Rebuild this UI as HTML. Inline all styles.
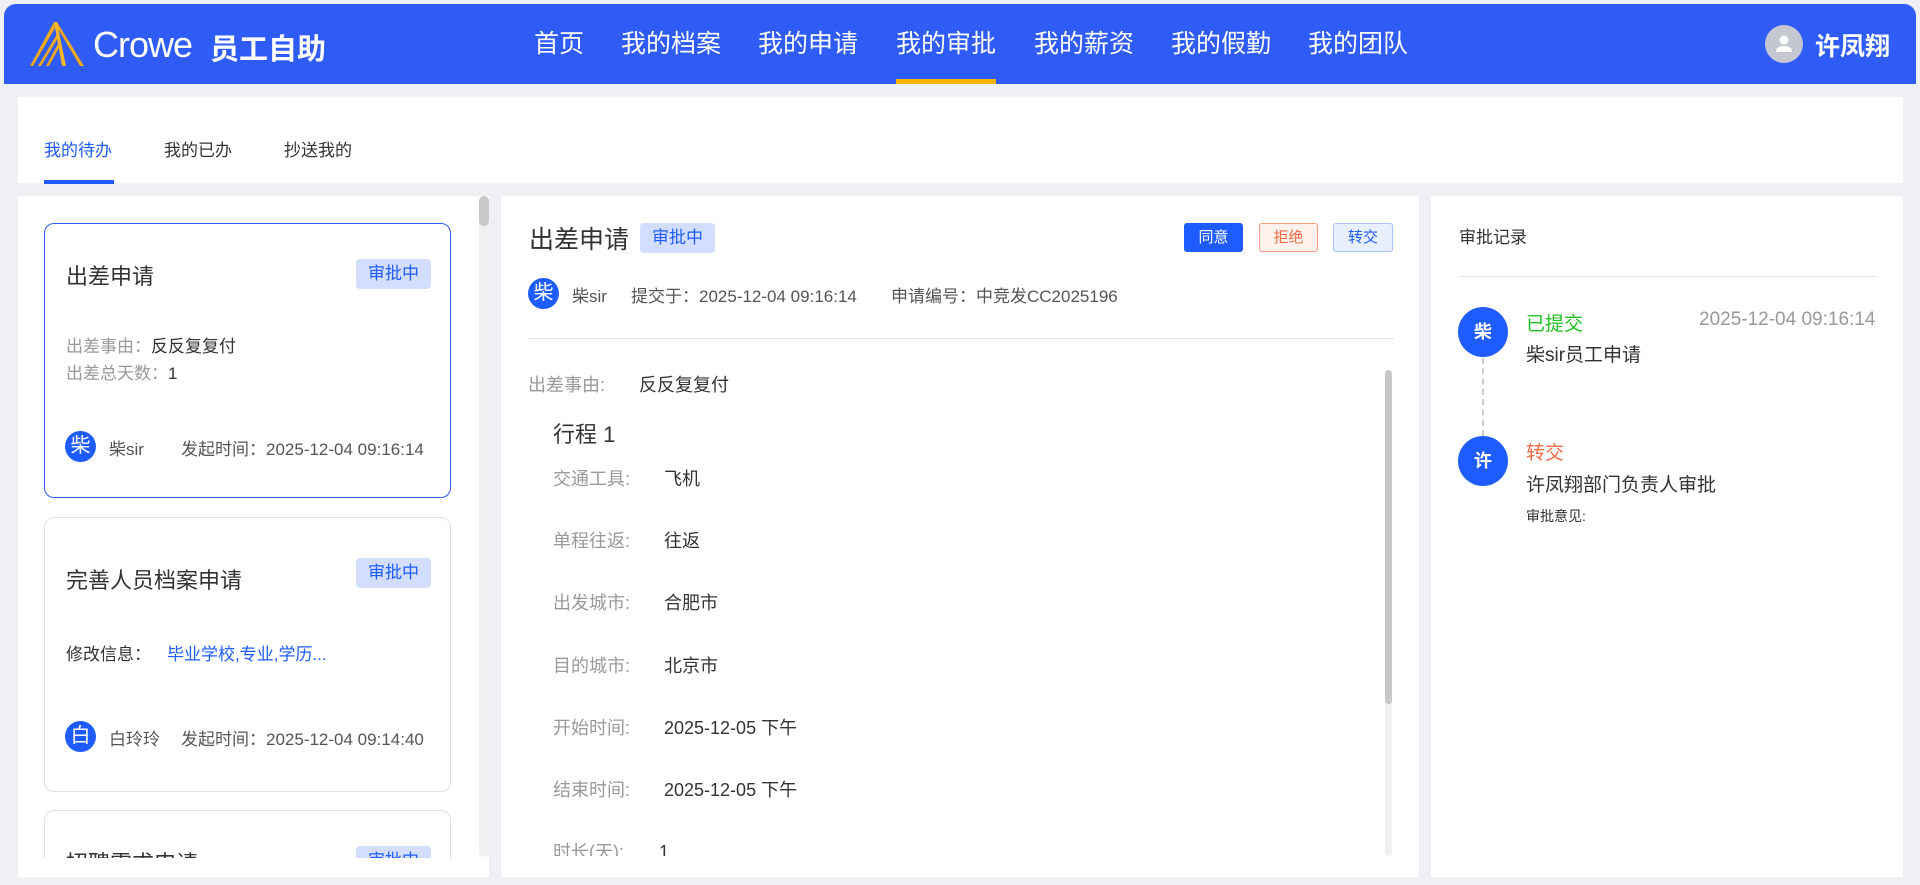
<!DOCTYPE html>
<html><head><meta charset="utf-8"><style>
*{margin:0;padding:0;box-sizing:border-box}
html,body{overflow:hidden}
body{width:1920px;height:885px;background:#eef0f4;font-family:"Liberation Sans","Noto Sans CJK SC",sans-serif;color:#333;position:relative}
.a{position:absolute;white-space:nowrap}
.hdr{left:4px;top:4px;width:1912px;height:80px;background:#2f5cf6;border-radius:12px 12px 0 0}
.nav{top:24px;font-size:25px;color:#fff}
.panel{background:#fff}
.card{position:absolute;left:26px;width:407px;border:1px solid #dcdfe6;border-radius:10px;background:#fff}
.badge{position:absolute;background:#d3deff;color:#1e5cff;font-size:17px;border-radius:4px;text-align:center;line-height:30px;height:30px;width:75px}
.av{position:absolute;width:31px;height:31px;border-radius:50%;background:#1e5cff;color:#fff;font-size:20px;line-height:31px;text-align:center}
.lbl{color:#999}
.row{font-size:18px}
.row .lbl{display:inline-block;width:111px}
</style></head><body>
<div class="a hdr"></div>
<svg class="a" style="left:28px;top:20px" width="56" height="48" viewBox="0 0 56 48"><path d="M26 2 L29 2 L56 46 L52 46 Z" fill="#f2a81d"/><path d="M26 2 L2 46 L5 46 L27 8 Z" fill="#f2a81d"/><path d="M29 14 L10 46 L13 46 L30 18 Z" fill="#f2a81d"/><path d="M32 20 L18 46 L21 46 L33 24 Z" fill="#f2a81d"/><path d="M26 2 L29 2 L38 46 L34 46 Z" fill="#f7b52a"/></svg>
<div class="a" style="left:93px;top:24px;font-size:36px;color:#fff;letter-spacing:-1px">Crowe</div>
<div class="a" style="left:210px;top:26px;font-size:29px;color:#fff;font-weight:bold">员工自助</div>
<div class="a nav" style="left:534px">首页</div>
<div class="a nav" style="left:621px">我的档案</div>
<div class="a nav" style="left:758px">我的申请</div>
<div class="a nav" style="left:896px">我的审批</div>
<div class="a nav" style="left:1034px">我的薪资</div>
<div class="a nav" style="left:1171px">我的假勤</div>
<div class="a nav" style="left:1308px">我的团队</div>
<div class="a" style="left:896px;top:79px;width:100px;height:5px;background:#f5b400"></div>
<div class="a" style="left:1765px;top:25px;width:38px;height:38px;border-radius:50%;background:#c4c7cf"></div>
<svg class="a" style="left:1774px;top:33px" width="20" height="22" viewBox="0 0 20 22"><circle cx="10" cy="7" r="4.5" fill="#fff"/><path d="M2 19 Q2 13 10 13 Q18 13 18 19 Z" fill="#fff"/></svg>
<div class="a" style="left:1815px;top:27px;font-size:25px;color:#fff;font-weight:bold">许凤翔</div>

<div class="a panel" style="left:18px;top:97px;width:1885px;height:86px"></div>
<div class="a" style="left:44px;top:136px;font-size:17px;color:#1e5cff">我的待办</div>
<div class="a" style="left:44px;top:180px;width:70px;height:4px;background:#1e5cff"></div>
<div class="a" style="left:164px;top:136px;font-size:17px;color:#333">我的已办</div>
<div class="a" style="left:284px;top:136px;font-size:17px;color:#333">抄送我的</div>

<div class="a panel" style="left:18px;top:196px;width:471px;height:681px;overflow:hidden">
 <div class="a" style="left:461px;top:0;width:10px;height:661px;background:#f0f0f0;border-radius:5px"></div>
 <div class="a" style="left:461px;top:0;width:10px;height:30px;background:#c8c8c8;border-radius:5px"></div>
 <div class="a" style="left:0;top:0;width:461px;height:662px;overflow:hidden">
  <div class="card" style="top:27px;height:275px;border-color:#2f5cf6">
   <div class="a" style="left:21px;top:35px;font-size:22px">出差申请</div>
   <div class="badge" style="left:311px;top:35px">审批中</div>
   <div class="a" style="left:21px;top:108px;font-size:17px"><span class="lbl">出差事由：</span>反反复复付</div>
   <div class="a" style="left:21px;top:135px;font-size:17px"><span class="lbl">出差总天数：</span>1</div>
   <div class="av" style="left:20px;top:207px">柴</div>
   <div class="a" style="left:64px;top:211px;font-size:17px;color:#555">柴sir</div>
   <div class="a" style="left:136px;top:211px;font-size:17px;color:#555">发起时间：2025-12-04 09:16:14</div>
  </div>
  <div class="card" style="top:321px;height:275px">
   <div class="a" style="left:21px;top:45px;font-size:22px">完善人员档案申请</div>
   <div class="badge" style="left:311px;top:40px">审批中</div>
   <div class="a" style="left:21px;top:122px;font-size:17px">修改信息：</div>
   <div class="a" style="left:122px;top:122px;font-size:17px;color:#1e5cff">毕业学校,专业,学历...</div>
   <div class="av" style="left:20px;top:203px">白</div>
   <div class="a" style="left:64px;top:207px;font-size:17px;color:#555">白玲玲</div>
   <div class="a" style="left:136px;top:207px;font-size:17px;color:#555">发起时间：2025-12-04 09:14:40</div>
  </div>
  <div class="card" style="top:614px;height:275px">
   <div class="a" style="left:21px;top:35px;font-size:22px">招聘需求申请</div>
   <div class="badge" style="left:311px;top:35px">审批中</div>
  </div>
 </div>
</div>

<div class="a panel" style="left:501px;top:196px;width:918px;height:681px;overflow:hidden">
 <div class="a" style="left:28px;top:24px;font-size:25px">出差申请</div>
 <div class="badge" style="left:139px;top:27px;width:75px;height:30px">审批中</div>
 <div class="a" style="left:683px;top:27px;width:59px;height:29px;background:#1e5cff;color:#fff;border-radius:3px;font-size:15px;text-align:center;line-height:29px">同意</div>
 <div class="a" style="left:758px;top:27px;width:59px;height:29px;background:#fff1ec;color:#f06a42;border:1px solid #f39a80;border-radius:3px;font-size:15px;text-align:center;line-height:27px">拒绝</div>
 <div class="a" style="left:832px;top:27px;width:60px;height:29px;background:#e8efff;color:#1e5cff;border:1px solid #a9c2ff;border-radius:3px;font-size:15px;text-align:center;line-height:27px">转交</div>
 <div class="av" style="left:27px;top:82px">柴</div>
 <div class="a" style="left:71px;top:86px;font-size:17px;color:#555">柴sir</div>
 <div class="a" style="left:130px;top:86px;font-size:17px;color:#555">提交于：2025-12-04 09:16:14</div>
 <div class="a" style="left:390px;top:86px;font-size:17px;color:#555">申请编号：中竞发CC2025196</div>
 <div class="a" style="left:27px;top:142px;width:866px;height:1px;background:#e0e2e8"></div>
 <div class="a" style="left:884px;top:174px;width:7px;height:486px;background:#f0f0f0;border-radius:4px"></div>
 <div class="a" style="left:884px;top:174px;width:7px;height:334px;background:#c8c8c8;border-radius:4px"></div>
 <div class="a row" style="left:27px;top:175px"><span class="lbl" style="width:111px">出差事由:</span>反反复复付</div>
 <div class="a" style="left:52px;top:221px;font-size:22px">行程 1</div>
 <div class="a row" style="left:52px;top:269px"><span class="lbl">交通工具:</span>飞机</div>
 <div class="a row" style="left:52px;top:331px"><span class="lbl">单程往返:</span>往返</div>
 <div class="a row" style="left:52px;top:393px"><span class="lbl">出发城市:</span>合肥市</div>
 <div class="a row" style="left:52px;top:456px"><span class="lbl">目的城市:</span>北京市</div>
 <div class="a row" style="left:52px;top:518px"><span class="lbl">开始时间:</span>2025-12-05 下午</div>
 <div class="a row" style="left:52px;top:580px"><span class="lbl">结束时间:</span>2025-12-05 下午</div>
 <div class="a" style="left:0;top:660px;width:918px;height:21px;background:#fff;z-index:2"></div>
 <div class="a row" style="left:52px;top:642px"><span class="lbl" style="width:106px">时长(天):</span>1</div>
</div>

<div class="a panel" style="left:1431px;top:196px;width:472px;height:681px">
 <div class="a" style="left:28px;top:27px;font-size:17px">审批记录</div>
 <div class="a" style="left:28px;top:80px;width:418px;height:1px;background:#e0e2e8"></div>
 <div class="a" style="left:51px;top:162px;height:78px;border-left:2px dashed #ccc"></div>
 <div class="a" style="left:27px;top:111px;width:50px;height:50px;border-radius:50%;background:#1e5cff;color:#fff;font-weight:bold;font-size:18px;text-align:center;line-height:50px">柴</div>
 <div class="a" style="left:27px;top:240px;width:50px;height:50px;border-radius:50%;background:#1e5cff;color:#fff;font-weight:bold;font-size:18px;text-align:center;line-height:50px">许</div>
 <div class="a" style="left:95px;top:113px;font-size:19px;color:#20c020">已提交</div>
 <div class="a" style="left:268px;top:113px;font-size:19px;color:#999">2025-12-04 09:16:14</div>
 <div class="a" style="left:95px;top:144px;font-size:19px">柴sir员工申请</div>
 <div class="a" style="left:95px;top:242px;font-size:19px;color:#f26b45">转交</div>
 <div class="a" style="left:95px;top:274px;font-size:19px">许凤翔部门负责人审批</div>
 <div class="a" style="left:95px;top:310px;font-size:14px">审批意见:</div>
</div>
</body></html>
